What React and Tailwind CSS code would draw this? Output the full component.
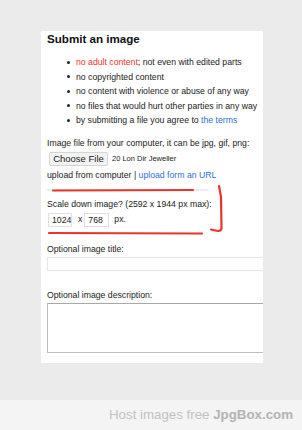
const rules = [
  [<span className="text-[#f2322a]">no adult content</span>, "; not even with edited parts"],
  ["no copyrighted content"],
  ["no content with violence or abuse of any way"],
  ["no files that would hurt other parties in any way"],
  ["by submitting a file you agree to ", <span className="text-[#2c6fd6]">the terms</span>],
];

export default function App() {
  return (
    <div
      className="relative w-[302px] h-[430px] bg-[#ebebeb] flex flex-col overflow-hidden text-[#222]"
      style={{ fontFamily: '"Liberation Sans", Arial, sans-serif' }}
    >
      <div className="flex-1 pt-[31px]">
        <div className="ml-[41px] w-[222px] h-[332px] bg-white overflow-hidden pl-[6px]">
          <h1 className="text-[11.6px] leading-[15px] h-[15px] font-bold text-[#111]">Submit an image</h1>

          <ul className="mt-[9px] text-[8.7px] leading-[14.5px]">
            {rules.map((r, i) => (
              <li key={i} className="flex items-center whitespace-nowrap">
                <span className="ml-[20px] mr-[6px] w-[3px] h-[3px] rounded-full bg-[#222]" />
                <span>{r}</span>
              </li>
            ))}
          </ul>

          <div className="mt-[8px] text-[8.7px] leading-[14px] h-[14px] whitespace-nowrap">
            Image file from your computer, it can be jpg, gif, png:
          </div>
          <div className="mt-[2px] flex items-center h-[14px] whitespace-nowrap">
            <button className="ml-[2px] h-[14px] w-[59px] rounded-[2px] border border-[#d4d4d4] bg-[#f3f3f3] text-[9.5px] leading-[12px] text-[#222]">
              Choose File
            </button>
            <span className="ml-[4px] text-[7.5px]">20 Lon Dir Jeweller</span>
          </div>
          <div className="mt-[2px] text-[8.7px] leading-[14px] h-[14px] whitespace-nowrap">
            upload from computer | <span className="text-[#2c6fd6]">upload form an URL</span>
          </div>

          <div className="mt-[7px] w-[162px] h-[2px] bg-[#eeeeee]" />

          <div className="mt-[6px] text-[8.7px] leading-[14px] h-[14px] whitespace-nowrap">
            Scale down image? (2592 x 1944 px max):
          </div>
          <div className="mt-[2px] flex items-center h-[14px] text-[8.7px] whitespace-nowrap">
            <div className="ml-[1px] w-[24px] h-[14px] border border-[#e0e0e0] pl-[3px] leading-[12px]">1024</div>
            <span className="ml-[6px]">x</span>
            <div className="ml-[2px] w-[25px] h-[14px] border border-[#e0e0e0] pl-[3px] leading-[12px]">768</div>
            <span className="ml-[5px]">px.</span>
          </div>

          <div className="mt-[15px] text-[8.7px] leading-[14px] h-[14px] whitespace-nowrap">Optional image title:</div>
          <div className="mt-[1px] w-[240px] h-[14px] border border-[#e6e6e6]" />

          <div className="mt-[17px] text-[8.7px] leading-[14px] h-[14px] whitespace-nowrap">
            Optional image description:
          </div>
          <div className="mt-[1px] w-[240px] h-[50px] border border-[#bdbdbd] border-t-[#a8a8a8]" />
        </div>
      </div>

      <div className="h-[30px] bg-[#f4f4f4] flex items-center justify-end pr-[9px] text-[13.3px] whitespace-nowrap">
        <span className="text-[#c2c2c2]">Host images free&nbsp;</span>
        <span className="font-bold text-[#b3b3b3]">JpgBox.com</span>
      </div>

      <svg className="absolute left-0 top-0 pointer-events-none" width="302" height="430" viewBox="0 0 302 430">
        <g stroke="#e8352a" strokeWidth="2.2" fill="none" strokeLinecap="round" strokeLinejoin="round">
          <path d="M53 190.5 L193 190" />
          <path d="M49 233 L202 233.5" />
          <path d="M219 186 L221 197 L221.5 228 Q221.5 231 218 231 L211 229.5" />
        </g>
      </svg>
    </div>
  );
}
